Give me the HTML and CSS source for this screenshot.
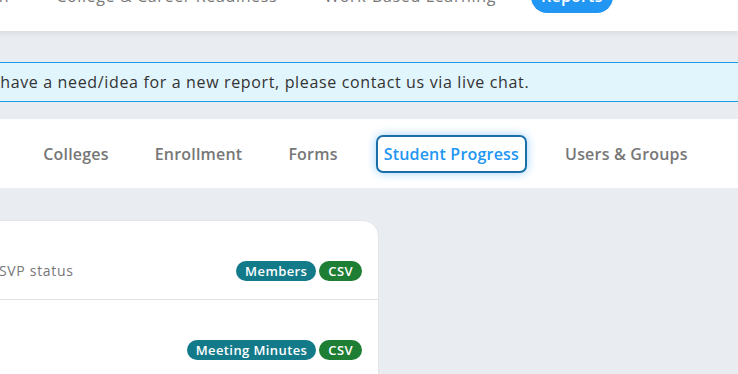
FILE: index.html
```html
<!DOCTYPE html>
<html lang="en">
<head>
    <meta charset="UTF-8">
    <meta name="viewport" content="width=device-width, initial-scale=1.0">
    <title>Reports</title>
    <link rel="stylesheet" href="styles.css">
</head>
<body>
    <header class="topnav">
        <a class="nav-link" href="#">Communication</a>
        <a class="nav-link" href="#">College &amp; Career Readiness</a>
        <a class="nav-link" href="#">Work-Based Learning</a>
        <a class="nav-link active" href="#">Reports</a>
    </header>

    <div class="alert">If you have a need/idea for a new report, please contact us via live chat.</div>

    <nav class="tabs">
        <a class="tab" href="#">Attendance</a>
        <a class="tab" href="#">Colleges</a>
        <a class="tab" href="#">Enrollment</a>
        <a class="tab" href="#">Forms</a>
        <a class="tab active" href="#">Student Progress</a>
        <a class="tab" href="#">Users &amp; Groups</a>
    </nav>

    <div class="card">
        <div class="report-row">
            <div class="report-info">
                <div class="report-title">Events</div>
                <div class="report-desc">Members with RSVP status</div>
            </div>
            <div class="badges">
                <span class="badge badge-type">Members</span>
                <span class="badge badge-csv">CSV</span>
            </div>
        </div>
        <div class="report-row">
            <div class="report-info">
                <div class="report-title">Meetings</div>
                <div class="report-desc">Notes</div>
            </div>
            <div class="badges">
                <span class="badge badge-type">Meeting Minutes</span>
                <span class="badge badge-csv">CSV</span>
            </div>
        </div>
    </div>
</body>
</html>
```

FILE: styles.css
```css
body {
    margin: 0;
    background-color: #e9ecf0;
    font-family: "Open Sans", "Noto Sans", sans-serif;
    color: #333;
    overflow: hidden;
}
a {
    text-decoration: none;
}
.topnav {
    display: flex;
    align-items: center;
    gap: 23px;
    height: 70px;
    margin: -39px 0 0 -130px;
    background: white;
    box-shadow: 0 2px 6px rgba(0,0,0,0.08);
}
.nav-link {
    color: #777;
    font-size: 16px;
    font-weight: 500;
    letter-spacing: 0.65px;
    padding: 5px 12px;
}
.nav-link.active {
    background: #2196f3;
    color: white;
    font-weight: 600;
    letter-spacing: 0.2px;
    border-radius: 16px;
    padding: 6px 10px;
}
.alert {
    margin: 31px -20px 0 -80px;
    height: 38px;
    line-height: 38px;
    padding-left: 30px;
    background: #e1f5fd;
    border-top: 1px solid #1a9be8;
    border-bottom: 1px solid #1a9be8;
    font-size: 16px;
    letter-spacing: 0.65px;
    color: #333;
}
.tabs {
    display: flex;
    align-items: center;
    gap: 30px;
    height: 69px;
    margin: 17px -20px 0 -102px;
    background: white;
}
.tab {
    color: #777;
    font-size: 16px;
    font-weight: 600;
    letter-spacing: 0.2px;
    padding: 0 6px;
    height: 34px;
    line-height: 34px;
    border: 2px solid transparent;
    border-radius: 7px;
}
.tab.active {
    color: #2196f3;
    border-color: #1a6fa8;
    box-shadow: 0 0 10px rgba(33,150,243,0.45);
}
.card {
    width: 515px;
    height: 200px;
    margin: 32px 0 0 -138px;
    background: white;
    border: 1px solid #e2e5e9;
    border-radius: 0 16px 0 0;
}
.report-row {
    display: flex;
    align-items: flex-end;
    justify-content: space-between;
    padding: 18px 16px 18px 20px;
    border-bottom: 1px solid #dee2e6;
}
.report-row:last-child {
    border-bottom: none;
}
.report-title {
    font-size: 14px;
    font-weight: 600;
    line-height: 22px;
    color: #333;
}
.report-desc {
    font-size: 14px;
    line-height: 20px;
    letter-spacing: 0.7px;
    color: #777;
}
.badges {
    display: flex;
    gap: 3px;
}
.badge {
    display: inline-block;
    height: 20px;
    line-height: 20px;
    padding: 0 9px;
    border-radius: 10px;
    font-size: 13px;
    font-weight: 600;
    letter-spacing: 0.4px;
    color: white;
}
.badge-type {
    background: #137a8a;
}
.badge-csv {
    background: #1e7e34;
}
```
